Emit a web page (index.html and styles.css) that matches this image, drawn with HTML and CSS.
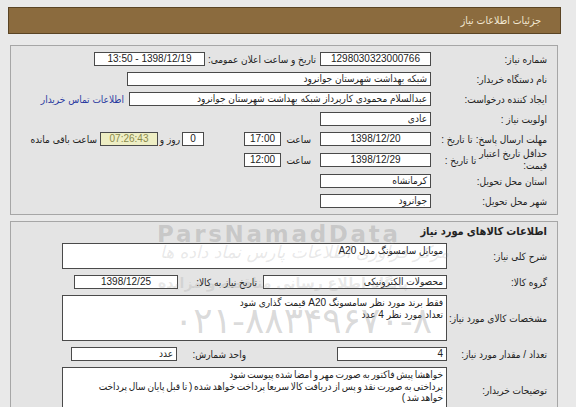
FILE: index.html
```html
<!DOCTYPE html>
<html lang="fa">
<head>
<meta charset="utf-8">
<title>جزئیات اطلاعات نیاز</title>
<link rel="stylesheet" href="styles.css">
</head>
<body>
<div class="page" dir="rtl">
  <div class="header">جزئیات اطلاعات نیاز</div>

  <div class="panel p1">
    <div class="row">
      <div class="lbl">شماره نیاز:</div>
      <div class="box w111 c">1298030323000766</div>
      <div class="lbl-mid">تاریخ و ساعت اعلان عمومی:</div>
      <div class="box w111 c">1398/12/19 - 13:50</div>
    </div>
    <div class="row">
      <div class="lbl">نام دستگاه خریدار:</div>
      <div class="box w304">شبکه بهداشت شهرستان جوانرود</div>
    </div>
    <div class="row">
      <div class="lbl">ایجاد کننده درخواست:</div>
      <div class="box w302">عبدالسلام محمودی کارپرداز شبکه بهداشت شهرستان جوانرود</div>
      <a class="link">اطلاعات تماس خریدار</a>
    </div>
    <div class="row">
      <div class="lbl">اولویت نیاز :</div>
      <div class="box w111">عادی</div>
    </div>
    <div class="row">
      <div class="lbl split"><span class="s1">مهلت ارسال پاسخ:</span><span class="s2">تا تاریخ :</span></div>
      <div class="box w111 c">1398/12/20</div>
      <span class="t-saat">ساعت</span>
      <div class="box w37 c">17:00</div>
      <div class="box w22 c days">0</div>
      <span class="t-rooz">روز و</span>
      <div class="box w58 c remain">07:26:43</div>
      <span class="t-remain">ساعت باقی مانده</span>
    </div>
    <div class="row tall">
      <div class="lbl split"><span class="s1 two">حداقل تاریخ اعتبار<br>قیمت:</span><span class="s2">تا تاریخ :</span></div>
      <div class="box w111 c">1398/12/29</div>
      <span class="t-saat">ساعت</span>
      <div class="box w37 c">12:00</div>
    </div>
    <div class="row">
      <div class="lbl">استان محل تحویل:</div>
      <div class="box w111">کرمانشاه</div>
    </div>
    <div class="row">
      <div class="lbl">شهر محل تحویل:</div>
      <div class="box w111">جوانرود</div>
    </div>
  </div>

  <div class="panel p2">
    <div class="title">اطلاعات کالاهای مورد نیاز</div>
    <div class="row2">
      <div class="lbl2">شرح کلی نیاز:</div>
      <div class="area h26">موبایل سامسونگ مدل A20</div>
    </div>
    <div class="row2">
      <div class="lbl2">گروه کالا:</div>
      <div class="box w184">محصولات الکترونیکی</div>
      <div class="lbl-date">تاریخ نیاز به کالا:</div>
      <div class="box w104 c">1398/12/25</div>
    </div>
    <div class="row2">
      <div class="lbl2">مشخصات کالای مورد نیاز:</div>
      <div class="area h46">فقط برند مورد نظر سامسونگ A20 قیمت گذاری شود<br>تعداد مورد نظر 4 عدد</div>
    </div>
    <div class="row2">
      <div class="lbl2">تعداد / مقدار مورد نیاز:</div>
      <div class="box w110">4</div>
      <div class="lbl-unit">واحد شمارش:</div>
      <div class="box w106">عدد</div>
    </div>
    <div class="row2">
      <div class="lbl2">توضیحات خریدار:</div>
      <div class="area h46 tight">خواهشا پیش فاکتور به صورت مهر و امضا شده پیوست شود<br>پرداختی به صورت نقد و پس از دریافت کالا سریعا پرداخت خواهد شده ( تا قبل پایان سال پرداخت<br>خواهد شد )</div>
    </div>
  </div>

  <div class="wm wm-name" dir="ltr">ParsNamadData</div>
  <div class="wm wm-script">مرکز فرآوری اطلاعات پارس نماد داده ها</div>
  <div class="wm wm-site">پایگاه اطلاع رسانی مناقصه و مزایده</div>
  <div class="wm wm-phone" dir="ltr">۰۲۱-۸۸۳۴۹۶۷۰-۸</div>
</div>
</body>
</html>
```

FILE: styles.css
```css
html, body {
  margin: 0;
  padding: 0;
  background: #e9e9e9;
}

body {
  font-family: "Liberation Sans", "DejaVu Sans Condensed", "DejaVu Sans", sans-serif;
  font-size: 10px;
  color: #222;
}

.page {
  position: relative;
  width: 553px;
  margin: 7px 0 0 8px;
  padding-bottom: 20px;
}

.header {
  box-sizing: border-box;
  height: 27px;
  line-height: 25px;
  background: #8b6b3e;
  border: 1px solid #5a4424;
  color: #f2e8d2;
  padding-right: 19px;
  font-size: 10.5px;
}

.panel {
  box-sizing: border-box;
  background: #e4e4e4;
  border: 1px solid #a6a6a6;
  margin: 0 3px 0 2px;
}

.p1 {
  margin-top: 11px;
  padding: 3px 10px 3px 10px;
}

.p2 {
  margin-top: 6px;
  padding: 0 10px 6px 10px;
  display: flex;
  flex-direction: column;
  gap: 6px;
}

.row {
  display: flex;
  align-items: center;
  height: 20px;
}

.row.tall {
  height: 22px;
}

.lbl {
  width: 116px;
  flex: none;
  white-space: nowrap;
}

.split {
  display: flex;
  align-items: center;
}

.s1 {
  flex: none;
}

.s1.two {
  line-height: 12px;
}

.s2 {
  flex: none;
  margin-right: 3px;
}

.box {
  box-sizing: border-box;
  height: 14px;
  line-height: 12px;
  border: 1px solid #4a4a4a;
  background: #fff;
  padding: 0 3px;
  white-space: nowrap;
  overflow: hidden;
  flex: none;
}

.c { text-align: center; }

.w111 { width: 111px; }
.w304 { width: 304px; }
.w302 { width: 302px; }
.w37 { width: 37px; }
.w22 { width: 22px; }
.w58 { width: 58px; }
.w184 { width: 184px; }
.w104 { width: 104px; }
.w110 { width: 110px; }
.w106 { width: 106px; }

.lbl-mid {
  box-sizing: border-box;
  width: 115px;
  flex: none;
  padding-right: 4px;
  white-space: nowrap;
}

.link {
  color: #2a3aa0;
  margin-right: 5px;
  white-space: nowrap;
}

.t-saat {
  box-sizing: border-box;
  width: 39px;
  padding-right: 9px;
  flex: none;
  white-space: nowrap;
}

.days {
  margin-right: 40px;
}

.t-rooz {
  box-sizing: border-box;
  width: 24px;
  padding-right: 2px;
  flex: none;
  white-space: nowrap;
}

.remain {
  background: #eeeec4;
  color: #8a8a4c;
}

.t-remain {
  margin-right: 3px;
  white-space: nowrap;
}

.title {
  height: 15px;
  line-height: 19px;
  font-weight: bold;
  font-size: 11px;
}

.row2 {
  display: flex;
  align-items: center;
}

.lbl2 {
  width: 100px;
  flex: none;
  white-space: nowrap;
}

.area {
  box-sizing: border-box;
  width: 385px;
  border: 1px solid #4a4a4a;
  background: #fff;
  padding: 1px 3px;
  line-height: 11.5px;
  flex: none;
}

.area.tight {
  word-spacing: -1px;
  white-space: nowrap;
}

.h26 { height: 26px; }
.h46 { height: 46px; }

.lbl-date {
  box-sizing: border-box;
  width: 85px;
  flex: none;
  padding-right: 6px;
  white-space: nowrap;
}

.lbl-unit {
  box-sizing: border-box;
  width: 160px;
  flex: none;
  padding-right: 91px;
  white-space: nowrap;
}

.wm {
  position: absolute;
  color: rgba(140, 140, 140, 0.32);
  pointer-events: none;
  white-space: nowrap;
}

.wm-name {
  left: 149px;
  top: 214px;
  font-family: "DejaVu Sans", sans-serif;
  font-weight: bold;
  font-size: 23px;
  letter-spacing: 2.7px;
}

.wm-script {
  left: 152px;
  top: 235px;
  font-family: "DejaVu Sans", sans-serif;
  font-style: italic;
  font-size: 17px;
  color: rgba(140, 140, 140, 0.2);
}

.wm-site {
  left: 150px;
  top: 268px;
  font-family: "DejaVu Sans", sans-serif;
  font-weight: bold;
  font-size: 14px;
  color: rgba(140, 140, 140, 0.2);
}

.wm-phone {
  left: 166px;
  top: 293px;
  font-family: "DejaVu Sans", sans-serif;
  font-size: 36px;
}
```
